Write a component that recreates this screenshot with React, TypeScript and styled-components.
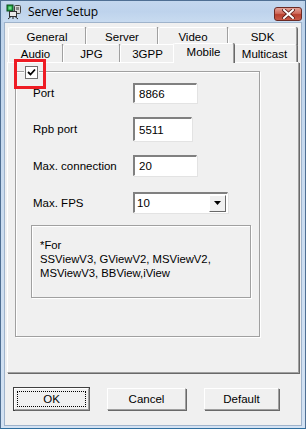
import React from "react";
import styled, { createGlobalStyle } from "styled-components";

const GlobalStyle = createGlobalStyle`
  html, body {
    margin: 0;
    padding: 0;
    background: #ffffff;
  }
  body {
    font-family: "Liberation Sans", Arial, sans-serif;
    font-size: 11px;
    color: #000;
  }
`;

const topTabs = [
  { label: "General", w: 78 },
  { label: "Server", w: 72 },
  { label: "Video", w: 70 },
  { label: "SDK", w: 69 },
];

const bottomTabs = [
  { label: "Audio", w: 55 },
  { label: "JPG", w: 57 },
  { label: "3GPP", w: 55 },
  { label: "Mobile", w: 57, active: true },
  { label: "Multicast", w: 65 },
];

const fields = [
  { label: "Port", value: "8866", w: 64, h: 20, top: 11 },
  { label: "Rpb port", value: "5511", w: 59, h: 24, top: 14 },
  { label: "Max. connection", value: "20", w: 64, h: 21, top: 14 },
];

const AppIcon = () => (
  <svg width="16" height="16" viewBox="0 0 16 16">
    <rect x="1" y="1" width="6" height="6" fill="#1a9c3c" stroke="#0b4a1c" />
    <rect x="2.5" y="2.5" width="3" height="3" fill="#6fe08a" />
    <rect x="8.5" y="1.5" width="6" height="8" rx="1" fill="#d8d8d8" stroke="#444" />
    <rect x="10" y="3" width="3" height="3" fill="#888" />
    <rect x="3.5" y="7.5" width="7" height="5" fill="#e8e8e8" stroke="#333" />
    <path d="M2 15 L5 12.5 M12 15 L9 12.5 M7 12.5 V15" stroke="#222" strokeWidth="1" />
  </svg>
);

const CloseGlyph = () => (
  <svg width="13" height="10" viewBox="0 0 13 10">
    <path d="M2 1 L11 9 M11 1 L2 9" stroke="#5a1d18" strokeWidth="3.6" strokeLinecap="square" />
    <path d="M2 1 L11 9 M11 1 L2 9" stroke="#ffffff" strokeWidth="2" strokeLinecap="square" />
  </svg>
);

const App = () => {
  return (
    <>
      <GlobalStyle />
      <Window>
        <TitleBar>
          <AppIcon />
          <Title>Server Setup</Title>
          <CloseButton>
            <CloseGlyph />
          </CloseButton>
        </TitleBar>
        <Client>
          <Highlight />
          <TabControl>
            <TabRow>
              {topTabs.map((t) => (
                <Tab key={t.label} $w={t.w}>
                  {t.label}
                </Tab>
              ))}
            </TabRow>
            <TabRow>
              {bottomTabs.map((t) => (
                <Tab key={t.label} $w={t.w} $active={t.active}>
                  {t.label}
                </Tab>
              ))}
            </TabRow>
            <Panel>
              <GroupBox>
                <CheckBox>
                  <svg width="9" height="9" viewBox="0 0 9 9">
                    <path d="M1 4 L3.5 6.5 L8 1.5" stroke="#000" strokeWidth="1.8" fill="none" />
                  </svg>
                </CheckBox>
                {fields.map((f) => (
                  <FormRow key={f.label} $top={f.top} $h={f.h}>
                    <Label>{f.label}</Label>
                    <Input $w={f.w} $h={f.h}>
                      {f.value}
                    </Input>
                  </FormRow>
                ))}
                <FormRow $top={16} $h={21}>
                  <Label>Max. FPS</Label>
                  <Combo>
                    <ComboText>10</ComboText>
                    <ComboButton>
                      <svg width="7" height="4" viewBox="0 0 7 4">
                        <path d="M0 0 H7 L3.5 4 Z" fill="#000" />
                      </svg>
                    </ComboButton>
                  </Combo>
                </FormRow>
                <InfoBox>
                  <div>*For</div>
                  <div>SSViewV3, GViewV2, MSViewV2,</div>
                  <div>MSViewV3, BBView,iView</div>
                </InfoBox>
              </GroupBox>
            </Panel>
          </TabControl>
          <ButtonBar>
            <Button $w={75} $default>
              <FocusRing>OK</FocusRing>
            </Button>
            <Button $w={79}>Cancel</Button>
            <Button $w={75}>Default</Button>
          </ButtonBar>
        </Client>
      </Window>
    </>
  );
};

export default App;

const Window = styled.div`
  position: relative;
  width: 306px;
  height: 429px;
  box-sizing: border-box;
  border: 1px solid #4f6f93;
  border-bottom-color: #2f6f9f;
  background: linear-gradient(180deg, #bcd2ea 0%, #c9dbef 40%, #d3e2f3 100%);
  padding: 0 2px 2px 2px;
  display: flex;
  flex-direction: column;
`;

const TitleBar = styled.div`
  height: 21px;
  display: flex;
  align-items: center;
  padding-left: 3px;
  background: linear-gradient(180deg, #c3d7ee 0%, #bed3ec 50%, #c8dbf0 100%);
`;

const Title = styled.span`
  margin-left: 6px;
  font-family: "Open Sans", "Noto Sans", sans-serif;
  font-size: 12px;
  color: #000;
  letter-spacing: -0.1px;
`;

const CloseButton = styled.div`
  margin-left: auto;
  margin-right: 1px;
  margin-top: 4px;
  width: 28px;
  height: 14px;
  box-sizing: border-box;
  border: 1px solid #6b2a24;
  border-radius: 3px;
  background: linear-gradient(180deg, #e3a197 0%, #cf6a5b 45%, #b8402f 55%, #c75a48 100%);
  display: flex;
  align-items: center;
  justify-content: center;
`;

const Client = styled.div`
  position: relative;
  flex: 1;
  margin: 0 1px 0 1px;
  background: #f0f0f0;
  border: 1px solid #9fb3cb;
`;

const Highlight = styled.div`
  position: absolute;
  left: 9px;
  top: 36px;
  width: 32px;
  height: 30px;
  box-sizing: border-box;
  border: 3px solid #ee1c24;
  z-index: 5;
`;

const TabControl = styled.div`
  margin: 3px 0 0 2px;
  width: 292px;
`;

const TabRow = styled.div`
  display: flex;
  align-items: flex-end;
  padding-left: 1px;
  height: 19px;

  & + & {
    height: 17px;
    margin-top: 0;
  }
`;

const Tab = styled.div<{ $w: number; $active?: boolean }>`
  position: relative;
  box-sizing: border-box;
  width: ${({ $w, $active }) => ($active ? $w + 4 : $w)}px;
  height: ${({ $active }) => ($active ? 20 : 18)}px;
  margin: 0 ${({ $active }) => ($active ? -2 : 0)}px
    ${({ $active }) => ($active ? -1 : 0)}px;
  padding-bottom: ${({ $active }) => ($active ? 3 : 0)}px;
  z-index: ${({ $active }) => ($active ? 2 : 0)};
  background: #f0f0f0;
  border-top: 1px solid #ffffff;
  border-left: 1px solid #ffffff;
  border-right: 1px solid #a0a0a0;
  box-shadow: 1px 0 0 #696969;
  border-radius: 2px 2px 0 0;
  display: flex;
  align-items: center;
  justify-content: center;
  font-size: 11.5px;
  color: #000;
`;

const Panel = styled.div`
  box-sizing: border-box;
  height: 311px;
  background: #f0f0f0;
  border-top: 1px solid #ffffff;
  border-left: 1px solid #ffffff;
  border-right: 1px solid #a0a0a0;
  border-bottom: 1px solid #a0a0a0;
  box-shadow: 1px 1px 0 #696969;
  padding: 8px 0 0 7px;
`;

const GroupBox = styled.div`
  position: relative;
  box-sizing: border-box;
  width: 245px;
  height: 266px;
  border: 1px solid #a0a0a0;
  box-shadow: inset 1px 1px 0 #ffffff, 1px 1px 0 #ffffff;
  padding: 0 0 0 17px;
`;

const CheckBox = styled.div`
  position: absolute;
  left: 9px;
  top: -6px;
  width: 11px;
  height: 11px;
  border: 1px solid #707070;
  background: #ffffff;
  box-shadow: 0 0 0 1px #f0f0f0;
  display: flex;
  align-items: center;
  justify-content: center;
`;

const FormRow = styled.div<{ $top: number; $h: number }>`
  display: flex;
  align-items: center;
  height: ${({ $h }) => $h}px;
  margin-top: ${({ $top }) => $top}px;
`;

const Label = styled.div`
  width: 100px;
  font-size: 11.5px;
  color: #000;
`;

const Input = styled.div<{ $w: number; $h: number }>`
  box-sizing: border-box;
  width: ${({ $w }) => $w}px;
  height: ${({ $h }) => $h}px;
  background: #ffffff;
  border-top: 2px solid #808080;
  border-left: 2px solid #808080;
  border-right: 1px solid #ffffff;
  border-bottom: 1px solid #ffffff;
  box-shadow: 1px 1px 0 #e3e3e3;
  padding-left: 4px;
  display: flex;
  align-items: center;
  font-size: 11.5px;
  color: #000;
`;

const Combo = styled(Input).attrs({ $w: 95, $h: 21 })`
  padding-left: 2px;
  padding-right: 1px;
`;

const ComboText = styled.span`
  flex: 1;
`;

const ComboButton = styled.div`
  box-sizing: border-box;
  width: 17px;
  height: 17px;
  background: #f0f0f0;
  border-top: 1px solid #ffffff;
  border-left: 1px solid #ffffff;
  border-right: 1px solid #696969;
  border-bottom: 1px solid #696969;
  display: flex;
  align-items: center;
  justify-content: center;
`;

const InfoBox = styled.div`
  box-sizing: border-box;
  width: 220px;
  height: 73px;
  margin: 12px 0 0 -2px;
  border: 1px solid #a0a0a0;
  box-shadow: inset 1px 1px 0 #ffffff, 1px 1px 0 #ffffff;
  padding: 12px 0 0 8px;
  font-size: 11.3px;
  line-height: 14px;
  color: #000;
`;

const ButtonBar = styled.div`
  display: flex;
  gap: 18px;
  padding: 15px 0 0 9px;
`;

const Button = styled.div<{ $w: number; $default?: boolean }>`
  box-sizing: border-box;
  width: ${({ $w }) => $w}px;
  height: 22px;
  background: #f0f0f0;
  border-top: 1px solid #ffffff;
  border-left: 1px solid #ffffff;
  border-right: 1px solid #a0a0a0;
  border-bottom: 1px solid #a0a0a0;
  box-shadow: ${({ $default }) =>
    $default
      ? "1px 1px 0 #696969, 0 0 0 1px #404040"
      : "1px 1px 0 #696969"};
  display: flex;
  align-items: center;
  justify-content: center;
  font-size: 11.5px;
  color: #000;
  padding: 2px;
`;

const FocusRing = styled.div`
  box-sizing: border-box;
  width: 100%;
  height: 100%;
  border: 1px dotted #000;
  display: flex;
  align-items: center;
  justify-content: center;
`;
